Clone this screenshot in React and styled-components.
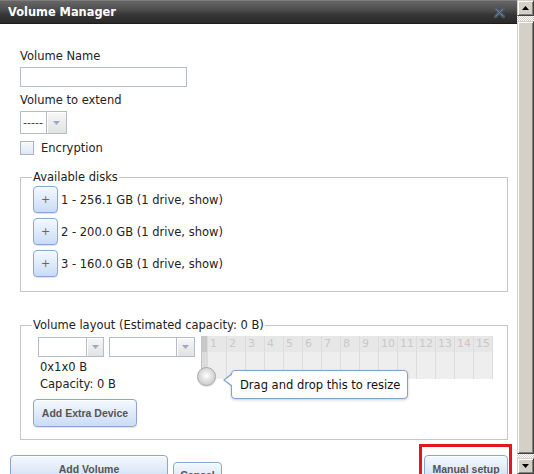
import React from "react";
import styled, { createGlobalStyle } from "styled-components";

// ============================================================================
// GLOBAL
// ============================================================================

const GlobalStyle = createGlobalStyle`
  *, *::before, *::after { box-sizing: border-box; }
  html, body { margin: 0; padding: 0; background: #fff; }
  body {
    font-family: "DejaVu Sans", Verdana, sans-serif;
    font-size: 11.5px;
    line-height: 14px;
    color: #222;
  }
`;

// ============================================================================
// FRAME - dialog + classic scrollbar
// ============================================================================

const Screen = styled.div`
  display: flex;
  width: 534px;
  height: 474px;
  overflow: hidden;
  background: #fff;
`;

const Dialog = styled.div`
  width: 517px;
  flex: none;
  display: flex;
  flex-direction: column;
  min-height: 0;
`;

const TitleBar = styled.div`
  flex: none;
  height: 24px;
  display: flex;
  align-items: center;
  justify-content: space-between;
  padding: 0 12px 0 8px;
  border-top: 1px solid #7c7c7c;
  border-bottom: 1px solid #1c1c1c;
  background: linear-gradient(#676767 0%, #4d4d4d 40%, #363636 62%, #2a2a2a 100%);
  color: #fff;
  font-weight: bold;
  font-size: 11.4px;
`;

const Body = styled.div`
  flex: 1;
  min-height: 0;
  overflow: hidden;
  padding: 25px 9px 0 10px;
`;

const FormArea = styled.div`
  margin-left: 10px;
  display: flex;
  flex-direction: column;
`;

const ScrollBar = styled.div`
  width: 17px;
  flex: none;
  display: flex;
  flex-direction: column;
  background: repeating-conic-gradient(#d4d0c8 0 25%, #ffffff 0 50%) 0 0 / 2px 2px;
`;

const ScrollButton = styled.div`
  flex: none;
  height: 16px;
  display: flex;
  align-items: center;
  justify-content: center;
  background: #d4d0c8;
  border: 1px solid;
  border-color: #d4d0c8 #404040 #404040 #d4d0c8;
  box-shadow: inset 1px 1px #fff, inset -1px -1px #808080;
`;

const ScrollThumb = styled(ScrollButton)`
  flex: 1;
  height: auto;
  margin: 5px 0 4px;
`;

// ============================================================================
// FORM PARTS
// ============================================================================

const Label = styled.div`
  margin-top: ${(p) => p.$gap || 0}px;
  line-height: 14px;
`;

const TextInput = styled.input`
  margin-top: 4px;
  width: 167px;
  height: 20px;
  border: 1px solid #b5bcc7;
  padding: 0 3px;
  font: inherit;
  outline: none;
`;

const SelectHolder = styled.div`
  margin-top: 4px;
`;

const SelectBox = styled.div`
  display: flex;
  width: ${(p) => p.$width}px;
  height: ${(p) => p.$height}px;
  border: 1px solid #b5bcc7;
  background: #fff;
  flex: none;
`;

const SelectText = styled.div`
  flex: 1;
  padding-left: 2px;
  display: flex;
  align-items: center;
  font-size: 11px;
  color: #333;
  overflow: hidden;
`;

const SelectArrow = styled.div`
  width: ${(p) => p.$width}px;
  flex: none;
  display: flex;
  align-items: center;
  justify-content: center;
  border-left: 1px solid #b5bcc7;
  background: linear-gradient(#f7f7f7, #e2e2e2);
  box-shadow: inset 1px 1px #fff;
`;

const CheckRow = styled.label`
  margin-top: 7px;
  display: flex;
  align-items: center;
  gap: 7px;
  height: 14px;
`;

const CheckBox = styled.span`
  width: 14px;
  height: 14px;
  border: 1px solid #a9b4c4;
  background: linear-gradient(#f7f9fc, #dfe8f3);
`;

const Fieldset = styled.fieldset`
  margin: ${(p) => p.$gap}px 0 0;
  padding: 0 10px ${(p) => p.$bottom}px 12px;
  border: 1px solid #c6c6c6;
  min-width: 0;
`;

const Legend = styled.legend`
  padding: 0 1px;
  margin-left: -1px;
  line-height: 14px;
`;

const DiskList = styled.div`
  margin-top: 2px;
  display: flex;
  flex-direction: column;
  gap: 5px;
`;

const DiskRow = styled.div`
  display: flex;
  align-items: center;
  gap: 3px;
  height: 27px;
`;

const BlueButton = styled.button`
  flex: none;
  width: ${(p) => p.$width}px;
  height: ${(p) => p.$height}px;
  margin-top: ${(p) => p.$top || 0}px;
  margin-left: ${(p) => p.$left || 0}px;
  padding: 0;
  border: 1px solid #86a8d1;
  border-radius: 4px;
  background: linear-gradient(#f4f8fe 0%, #e2ecfa 45%, #c9dcf4 100%);
  box-shadow: inset 0 1px 0 rgba(255, 255, 255, 0.9), 0 1px 1px rgba(0, 0, 0, 0.12);
  color: #555;
  font-family: "Liberation Sans", Arial, sans-serif;
  font-weight: bold;
  font-size: 10.5px;
  cursor: pointer;
`;

const PlusButton = styled(BlueButton)`
  font-family: "DejaVu Sans", Verdana, sans-serif;
  font-weight: normal;
  font-size: 11px;
  color: #666;
`;

// ============================================================================
// VOLUME LAYOUT PARTS
// ============================================================================

const LayoutRow = styled.div`
  margin-top: 4px;
  display: flex;
  align-items: flex-start;
`;

const LayoutControls = styled.div`
  width: 162px;
  flex: none;
  padding-top: 1px;
  display: flex;
  flex-direction: column;
  align-items: flex-start;
`;

const SelectRow = styled.div`
  margin-left: 5px;
  display: flex;
  gap: 5px;
`;

const InfoText = styled.div`
  margin: 3px 0 0 7px;
`;

const GridWrap = styled.div`
  position: relative;
  margin-left: 6px;
  width: 292px;
  height: 43px;
  flex: none;
`;

const Grid = styled.div`
  display: flex;
  height: 100%;
  background: #eeeeee;
  border-right: 1px solid #dcdcdc;
`;

const GridGrip = styled.div`
  width: 6px;
  flex: none;
  border-left: 1px solid #c2c2c2;
  background: linear-gradient(#c9c9c9 0 16px, #dcdcdc 16px 100%);
`;

const GridCol = styled.div`
  width: 19px;
  flex: none;
  border-left: 1px solid #dcdcdc;
`;

const GridHead = styled.div`
  height: 16px;
  padding-left: 2px;
  background: #e7e7e7;
  color: ${(p) => (p.$tint ? "#d6c2c2" : "#c8c8c8")};
  font-size: 11px;
  line-height: 16px;
`;

const Handle = styled.div`
  position: absolute;
  left: -4px;
  top: 31px;
  width: 19px;
  height: 19px;
  border-radius: 50%;
  border: 1px solid #a9a9a9;
  background: radial-gradient(circle at 50% 45%, #ffffff 0%, #e6e6e6 35%, #cfcfcf 70%, #bababa 100%);
  box-shadow: 0 1px 1px rgba(0, 0, 0, 0.15);
`;

const Tooltip = styled.div`
  position: absolute;
  left: 30px;
  top: 34px;
  width: 177px;
  height: 29px;
  padding-left: 8px;
  display: flex;
  align-items: center;
  white-space: nowrap;
  background: #fff;
  border: 1px solid #7fa2c9;
  border-radius: 4px;
  box-shadow: 0 1px 3px rgba(0, 0, 0, 0.2);
  color: #111;

  &::before,
  &::after {
    content: "";
    position: absolute;
    border-style: solid;
    border-color: transparent;
  }
  &::before {
    left: -9px;
    top: 2px;
    border-width: 7px 9px 7px 0;
    border-right-color: #7fa2c9;
  }
  &::after {
    left: -7px;
    top: 3px;
    border-width: 6px 8px 6px 0;
    border-right-color: #fff;
  }
`;

// ============================================================================
// FOOTER BUTTONS
// ============================================================================

const ActionRow = styled.div`
  margin-top: 4px;
  display: flex;
  align-items: flex-start;
`;

const Highlight = styled.div`
  margin-left: auto;
  margin-right: -4px;
  padding: 8px 1px 0 2px;
  border: 3px solid #e3161f;
  border-bottom: none;
`;

// ============================================================================
// ICONS
// ============================================================================

const CloseIcon = () => (
  <svg width="11" height="11" viewBox="0 0 11 11">
    <path d="M1.5 1.5 L9.5 9.5 M9.5 1.5 L1.5 9.5" stroke="#4b5b6c" strokeWidth="3.2" strokeLinecap="square" />
    <path d="M2 2 L9 9 M9 2 L2 9" stroke="#6f8092" strokeWidth="1" />
  </svg>
);

const DownTriangle = ({ color = "#9aabc6" }) => (
  <svg width="7" height="4" viewBox="0 0 7 4">
    <polygon points="0,0 7,0 3.5,4" fill={color} />
  </svg>
);

const ScrollArrow = ({ up }) => (
  <svg width="7" height="4" viewBox="0 0 7 4">
    <polygon points={up ? "3.5,0 7,4 0,4" : "0,0 7,0 3.5,4"} fill="#000" />
  </svg>
);

const Select = ({ width, height, arrow, text }) => (
  <SelectBox $width={width} $height={height}>
    <SelectText>{text}</SelectText>
    <SelectArrow $width={arrow}>
      <DownTriangle />
    </SelectArrow>
  </SelectBox>
);

// ============================================================================
// APP
// ============================================================================

const disks = [
  "1 - 256.1 GB (1 drive, show)",
  "2 - 200.0 GB (1 drive, show)",
  "3 - 160.0 GB (1 drive, show)",
];

const columns = Array.from({ length: 15 }, (_, i) => i + 1);

export default function App() {
  return (
    <>
      <GlobalStyle />
      <Screen>
        <Dialog>
          <TitleBar>
            <span>Volume Manager</span>
            <CloseIcon />
          </TitleBar>

          <Body>
            <FormArea>
              <Label>Volume Name</Label>
              <TextInput type="text" />

              <Label $gap={6}>Volume to extend</Label>
              <SelectHolder>
                <Select width={47} height={23} arrow={20} text="-----" />
              </SelectHolder>

              <CheckRow>
                <CheckBox />
                Encryption
              </CheckRow>

              <Fieldset $gap={15} $bottom={14}>
                <Legend>Available disks</Legend>
                <DiskList>
                  {disks.map((disk) => (
                    <DiskRow key={disk}>
                      <PlusButton $width={25} $height={27}>+</PlusButton>
                      {disk}
                    </DiskRow>
                  ))}
                </DiskList>
              </Fieldset>

              <Fieldset $gap={26} $bottom={12}>
                <Legend>Volume layout (Estimated capacity: 0 B)</Legend>
                <LayoutRow>
                  <LayoutControls>
                    <SelectRow>
                      <Select width={66} height={20} arrow={17} />
                      <Select width={86} height={20} arrow={18} />
                    </SelectRow>
                    <InfoText>0x1x0 B</InfoText>
                    <InfoText>Capacity: 0 B</InfoText>
                    <BlueButton $width={104} $height={28} $top={8}>
                      Add Extra Device
                    </BlueButton>
                  </LayoutControls>

                  <GridWrap>
                    <Grid>
                      <GridGrip />
                      {columns.map((n) => (
                        <GridCol key={n}>
                          <GridHead $tint={n === 14}>{n}</GridHead>
                        </GridCol>
                      ))}
                    </Grid>
                    <Handle />
                    <Tooltip>Drag and drop this to resize</Tooltip>
                  </GridWrap>
                </LayoutRow>
              </Fieldset>
            </FormArea>

            <ActionRow>
              <BlueButton $width={158} $height={28} $top={11}>
                Add Volume
              </BlueButton>
              <BlueButton $width={49} $height={26} $top={18} $left={5}>
                Cancel
              </BlueButton>
              <Highlight>
                <BlueButton $width={84} $height={28}>Manual setup</BlueButton>
              </Highlight>
            </ActionRow>
          </Body>
        </Dialog>

        <ScrollBar>
          <ScrollButton>
            <ScrollArrow up />
          </ScrollButton>
          <ScrollThumb />
          <ScrollButton>
            <ScrollArrow />
          </ScrollButton>
        </ScrollBar>
      </Screen>
    </>
  );
}
